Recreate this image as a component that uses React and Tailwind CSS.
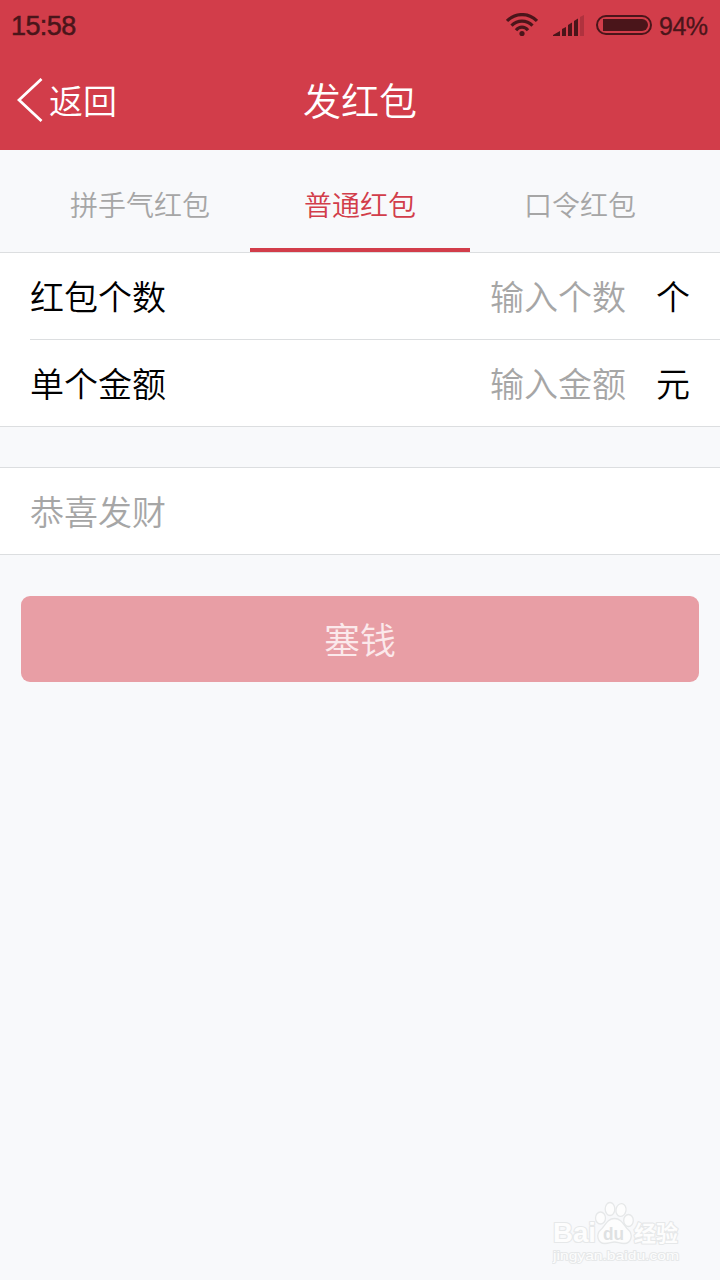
import React, { useState } from 'react';

const tabs = ['拼手气红包', '普通红包', '口令红包'];

function StatusBar() {
    return (
        <div className="h-[50px] pl-[11px] pr-3 flex items-center justify-between text-[#4a151a] font-['Liberation_Sans',sans-serif] font-normal leading-none [-webkit-text-stroke:0.5px_currentColor]">
            <span className="text-[27px] tracking-[-0.6px] pt-[3px]">15:58</span>
            <div className="flex items-center">
                <svg className="w-8 h-6" viewBox="0 0 32 24" fill="none" stroke="currentColor" strokeWidth="3.200">
                    <path d="M1 8C9.500 -0.600 22.500 -0.600 31 8" />
                    <path d="M5.500 12.600C11.500 6.600 20.500 6.600 26.500 12.600" />
                    <path d="M10 17.200C13.500 13.200 18.500 13.200 22 17.200" />
                    <circle cx="16" cy="20.500" r="2.600" fill="currentColor" stroke="none" />
                </svg>
                <svg className="w-[31px] h-[21px] ml-[15px] mt-px" viewBox="0 0 31 21" fill="currentColor">
                    <path d="M0 21V20L7 16V21Z" />
                    <path d="M9 21V14L13 12V21Z" />
                    <path d="M15 21V10L19 7.500V21Z" />
                    <path d="M21 21V6L25 3.500V21Z" />
                    <path d="M27 21V2L31 0V21Z" opacity="0.25" />
                </svg>
                <div className="w-14 h-5 ml-3 rounded-full border-2 border-current pl-[5px] pr-0.5 py-0.5">
                    <div className="h-3 rounded-l-[2px] rounded-r-full bg-current" />
                </div>
                <span className="w-[49px] text-[25px] tracking-[-0.5px] ml-[7px] pt-[3px] whitespace-nowrap [-webkit-text-stroke:0.3px_currentColor]">94%</span>
            </div>
        </div>
    );
}

function FormRow({ label, placeholder, unit }) {
    return (
        <label className="h-[86px] pl-[30px] pr-[30px] pb-0.5 flex items-center text-[34px]">
            <span>{label}</span>
            <input
                placeholder={placeholder}
                className="ml-auto w-[200px] text-right bg-transparent outline-none placeholder:text-[#a6a6a6] placeholder:opacity-100"
            />
            <span className="ml-[30px]">{unit}</span>
        </label>
    );
}

function Watermark() {
    return (
        <div className="absolute left-[552px] top-[1201px] w-[132px] h-[64px]">
            <svg className="w-full h-full" viewBox="0 0 132 64" fill="#fdfdfd" stroke="#e6e8e9" strokeWidth="1.300">
                <g strokeWidth="2.200" paintOrder="stroke" strokeLinejoin="round">
                    <text x="1" y="41" fontSize="28" fontWeight="700" fontFamily="'Liberation Sans', sans-serif" textLength="43" lengthAdjust="spacingAndGlyphs">Bai</text>
                    <text x="82" y="39.500" fontSize="22" fontWeight="700" fontFamily="'Noto Sans CJK SC', sans-serif" textLength="44" lengthAdjust="spacingAndGlyphs">经验</text>
                    <text x="1" y="58.500" fontSize="13" fontWeight="400" strokeWidth="1.800" fontFamily="'Liberation Sans', sans-serif" textLength="126" lengthAdjust="spacingAndGlyphs">jingyan.baidu.com</text>
                </g>
                <path d="M62.500 17.500C55 17.500 53 25 48.500 29C44 33 45 42.500 53 42.500C57 42.500 59.500 41 62.500 41C65.500 41 68 42.500 72 42.500C80 42.500 81 33 76.500 29C72 25 70 17.500 62.500 17.500Z" />
                <ellipse cx="48.500" cy="17" rx="5" ry="6" />
                <ellipse cx="58" cy="8" rx="4.800" ry="6.500" />
                <ellipse cx="69" cy="9" rx="5" ry="6.500" transform="rotate(10 69 9)" />
                <ellipse cx="76.500" cy="19.500" rx="4.800" ry="6" />
                <text x="51" y="38.500" fontSize="19" fontWeight="700" fill="#dfe1e2" stroke="none" fontFamily="'Liberation Sans', sans-serif" textLength="21" lengthAdjust="spacingAndGlyphs">du</text>
            </svg>
        </div>
    );
}

export default function App() {
    const [active, setActive] = useState(1);

    return (
        <div className="relative w-[720px] h-[1280px] overflow-hidden bg-[#f8f9fb] text-black font-['Noto_Sans_CJK_SC',sans-serif] font-[350]">
            <header className="h-[150px] bg-[#d23d4a]">
                <StatusBar />
                <nav className="h-[100px] grid grid-cols-3 items-center text-white">
                    <button className="flex items-center pl-[17px] text-[34px] leading-none">
                        <svg className="w-[26px] h-[44px] mr-1.5" viewBox="0 0 26 44" fill="none" stroke="currentColor" strokeWidth="2.800">
                            <path d="M24.500 1L2 22L24.500 43" />
                        </svg>
                        <span className="pb-px">返回</span>
                    </button>
                    <h1 className="pb-[3px] text-center text-[38px] leading-none">发红包</h1>
                </nav>
            </header>

            <div className="h-[103px] px-[30px] flex border-b border-[#dcdee0]">
                {tabs.map((tab, i) => (
                    <button
                        key={tab}
                        onClick={() => setActive(i)}
                        className={`w-[220px] pt-2.5 text-[28px] border-b-4 ${i === active ? 'text-[#d23d4a] border-[#d23d4a]' : 'text-[#a6a6a6] border-transparent'}`}
                    >
                        {tab}
                    </button>
                ))}
            </div>

            <section className="bg-white border-b border-[#dcdee0]">
                <FormRow label="红包个数" placeholder="输入个数" unit="个" />
                <div className="ml-[30px] h-px bg-[#dcdee0]" />
                <FormRow label="单个金额" placeholder="输入金额" unit="元" />
            </section>

            <section className="mt-10 h-[88px] px-[30px] pb-0.5 flex items-center bg-white border-y border-[#dcdee0]">
                <input
                    placeholder="恭喜发财"
                    className="w-full text-[34px] bg-transparent outline-none placeholder:text-[#a6a6a6] placeholder:opacity-100"
                />
            </section>

            <div className="px-[21px] pt-[41px]">
                <button className="w-full h-[86px] pb-[3px] rounded-[9px] bg-[#e89ea5] text-[#fbe9eb] text-[36px]">塞钱</button>
            </div>

            <Watermark />
        </div>
    );
}
